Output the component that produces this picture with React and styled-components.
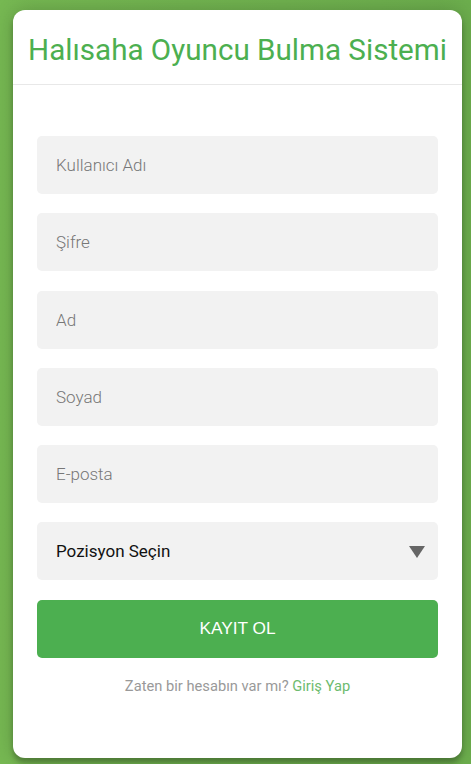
import React from 'react'
import styled, { createGlobalStyle } from 'styled-components'

const GlobalStyle = createGlobalStyle`
  html, body {
    margin: 0;
    padding: 0;
  }
  body {
    min-height: 764px;
    background: linear-gradient(90deg, #76b852, #6cae4d);
    font-family: Roboto, "Noto Sans", sans-serif;
  }
`

const Page = styled.div`
  padding: 10px 9px 6px 13px;
`

const Card = styled.div`
  background: #fff;
  border-radius: 12px;
  height: 748px;
  box-shadow: 0 0 20px rgba(0, 0, 0, 0.2), 0 5px 5px rgba(0, 0, 0, 0.24);
  overflow: hidden;
`

const Header = styled.div`
  height: 74px;
  border-bottom: 1px solid #e8e8e8;
  display: flex;
  align-items: center;
  justify-content: center;
`

const Title = styled.h1`
  margin: 6px 0 0;
  font-size: 29.6px;
  font-weight: 400;
  color: #4caf50;
`

const Form = styled.form`
  display: flex;
  flex-direction: column;
  gap: 19.3px;
  padding: 51px 24px 0;
`

const Input = styled.input`
  box-sizing: border-box;
  height: 58px;
  width: 100%;
  border: 0;
  border-radius: 5px;
  background: #f2f2f2;
  padding: 0 19px;
  font-family: Roboto, sans-serif;
  font-size: 17px;
  font-weight: 300;
  color: #333;
  outline: none;
  &::placeholder {
    color: #777;
  }
`

const SelectBox = styled.div`
  box-sizing: border-box;
  height: 58px;
  border-radius: 5px;
  background: #f2f2f2;
  padding: 0 13px 0 19px;
  display: flex;
  align-items: center;
  justify-content: space-between;
  font-size: 17px;
  font-weight: 400;
  color: #111;
`

const Arrow = styled.span`
  width: 0;
  height: 0;
  border-left: 8px solid transparent;
  border-right: 8px solid transparent;
  border-top: 12px solid #666;
  margin-top: 2px;
`

const Submit = styled.button`
  height: 58px;
  border: 0;
  border-radius: 5px;
  background: #4caf50;
  color: #fff;
  font-family: "Liberation Sans", Arial, sans-serif;
  font-size: 17.3px;
  text-transform: uppercase;
  cursor: pointer;
`

const Footer = styled.p`
  margin: 0;
  text-align: center;
  font-size: 14.7px;
  color: #999;
`

const Link = styled.a`
  color: #6dbb6f;
  text-decoration: none;
`

export default function App() {
  return (
    <>
      <GlobalStyle />
      <Page>
        <Card>
          <Header>
            <Title>Halısaha Oyuncu Bulma Sistemi</Title>
          </Header>
          <Form onSubmit={e => e.preventDefault()}>
            <Input placeholder="Kullanıcı Adı" />
            <Input type="password" placeholder="Şifre" />
            <Input placeholder="Ad" />
            <Input placeholder="Soyad" />
            <Input placeholder="E-posta" />
            <SelectBox>
              Pozisyon Seçin
              <Arrow />
            </SelectBox>
            <Submit type="submit">Kayıt Ol</Submit>
            <Footer>
              Zaten bir hesabın var mı? <Link href="#">Giriş Yap</Link>
            </Footer>
          </Form>
        </Card>
      </Page>
    </>
  )
}
